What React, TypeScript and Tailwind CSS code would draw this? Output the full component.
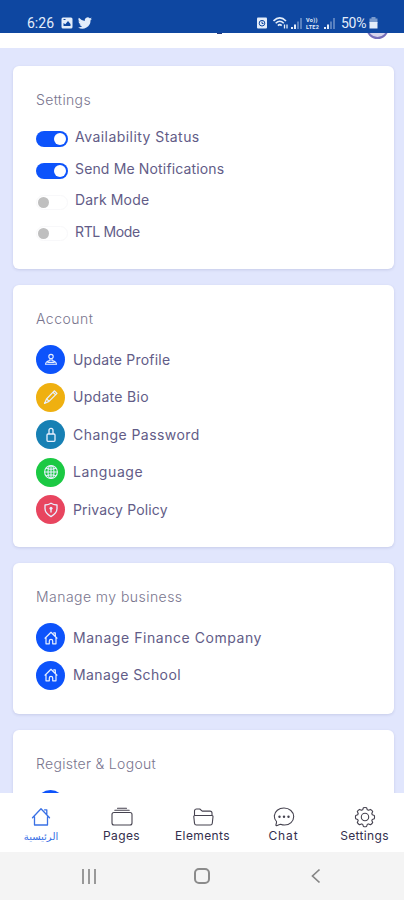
import type { ReactNode } from 'react';

interface Toggle {
    label: string;
    on: boolean;
    tracking: string;
}

interface Row {
    label: string;
    color: string;
    icon: ReactNode;
    tracking: string;
}

interface SectionProps {
    title: string;
    tracking: string;
    className: string;
    children: ReactNode;
}

const PersonIcon = () => (
    <svg viewBox="0 0 16 16" fill="none" stroke="currentColor" strokeWidth="1.1" className="w-4 h-4" aria-hidden="true">
        <circle cx="8" cy="4.6" r="2.2" />
        <path d="M7 6.7v1.8C4.200 9 2.700 10 2.500 12.200h11C13.300 10 11.800 9 9 8.500V6.700M4.400 10.400h7.200" />
    </svg>
);

const PencilIcon = () => (
    <svg viewBox="0 0 16 16" fill="none" stroke="currentColor" strokeWidth="1.2" strokeLinejoin="round" className="w-4 h-4" aria-hidden="true">
        <path d="M1.5 14.5l2-4.500L11.300 1.800l2.700 2.600-8 8-4.500 2.100zM10 3.300l2.700 2.600M3.700 10l2.400 2.200" />
    </svg>
);

const LockIcon = () => (
    <svg viewBox="0 0 16 16" fill="none" stroke="currentColor" strokeWidth="1.3" strokeLinejoin="round" className="w-4 h-4" aria-hidden="true">
        <rect x="4" y="7" width="8" height="7.3" rx="1" />
        <path d="M6 7V3.300a2 2 0 014 0V7" />
    </svg>
);

const GlobeIcon = () => (
    <svg viewBox="0 0 16 16" fill="none" stroke="currentColor" strokeWidth="1.1" className="w-4 h-4" aria-hidden="true">
        <circle cx="8" cy="8" r="6.4" />
        <ellipse cx="8" cy="8" rx="3" ry="6.4" />
        <path d="M8 1.6v12.8M1.6 8h12.8M3.2 4.2c2.8 1.2 6.8 1.2 9.6 0M3.2 11.8c2.8-1.2 6.8-1.2 9.6 0" />
    </svg>
);

const ShieldIcon = () => (
    <svg viewBox="0 0 16 16" fill="none" stroke="currentColor" strokeWidth="1.3" strokeLinejoin="round" className="w-4 h-4" aria-hidden="true">
        <path d="M8 1.2c1.8 1.2 3.6 1.7 6 1.8v3.6c0 3.6-2.200 6-6 8-3.800-2-6-4.400-6-8V3c2.400-.1 4.200-.6 6-1.800z" />
        <circle cx="8" cy="6.2" r="1.5" fill="currentColor" stroke="none" />
        <path d="M8 6.5v4" strokeWidth="1.4" />
    </svg>
);

const HomeIcon = () => (
    <svg viewBox="0 0 16 16" fill="none" stroke="currentColor" strokeWidth="1.2" strokeLinejoin="round" strokeLinecap="round" className="w-4 h-4" aria-hidden="true">
        <path d="M3 7.300v6.500h3.300v-2.800a1.700 1.700 0 013.400 0v2.800H13V7.300M2 8.200l6-5.900 6 5.900M10.700 2.900h1.600v3.200" />
    </svg>
);

const toggles: Toggle[] = [
    { label: 'Availability Status', on: true, tracking: 'tracking-[0.45px]' },
    { label: 'Send Me Notifications', on: true, tracking: 'tracking-[0.15px]' },
    { label: 'Dark Mode', on: false, tracking: 'tracking-[0.15px]' },
    { label: 'RTL Mode', on: false, tracking: 'tracking-[-0.35px]' },
];

const accountRows: Row[] = [
    { label: 'Update Profile', color: 'bg-[#0d53fb]', icon: <PersonIcon />, tracking: 'tracking-[0.2px]' },
    { label: 'Update Bio', color: 'bg-[#efb010]', icon: <PencilIcon />, tracking: 'tracking-[0.3px]' },
    { label: 'Change Password', color: 'bg-[#1780b4]', icon: <LockIcon />, tracking: 'tracking-[0.45px]' },
    { label: 'Language', color: 'bg-[#1bc943]', icon: <GlobeIcon />, tracking: 'tracking-[0.6px]' },
    { label: 'Privacy Policy', color: 'bg-[#e8455f]', icon: <ShieldIcon />, tracking: 'tracking-[0.15px]' },
];

const businessRows: Row[] = [
    { label: 'Manage Finance Company', color: 'bg-[#0d53fb]', icon: <HomeIcon />, tracking: 'tracking-[0.55px]' },
    { label: 'Manage School', color: 'bg-[#0d53fb]', icon: <HomeIcon />, tracking: 'tracking-[0.4px]' },
];

function Section({ title, tracking, className, children }: SectionProps) {
    return (
        <section className={`shrink-0 rounded-md bg-white px-[23px] pt-[22px] shadow-[0_1px_3px_rgba(60,70,130,0.16)] ${className}`}>
            <h2 className={`h-6 whitespace-nowrap text-sm leading-6 font-light text-[#79758e] ${tracking}`}>{title}</h2>
            {children}
        </section>
    );
}

function IconRow({ label, color, icon, tracking }: Row) {
    return (
        <li className="flex h-[37.5px] items-center gap-2">
            <span className={`flex h-[29px] w-[29px] shrink-0 items-center justify-center rounded-full text-[#e8f0ff] ${color}`}>
                {icon}
            </span>
            <span className={`whitespace-nowrap text-sm text-[#625c87] ${tracking}`}>{label}</span>
        </li>
    );
}

function ToggleRow({ label, on, tracking }: Toggle) {
    return (
        <li className="flex h-[31.5px] items-center gap-[7px]">
            {on ? (
                <span className="mt-[3px] flex h-4 w-8 items-center justify-end rounded-full bg-[#0d53fb] pr-[2px]">
                    <span className="h-3 w-3 rounded-full bg-white" />
                </span>
            ) : (
                <span className="mt-[3px] flex h-[15px] w-8 items-center rounded-full border border-[#f8f8fa] pl-[1px]">
                    <span className="h-[11px] w-[11px] rounded-full bg-[#bfbfbf]" />
                </span>
            )}
            <span className={`-mt-px whitespace-nowrap text-sm text-[#625c87] ${tracking}`}>{label}</span>
        </li>
    );
}

function Signal() {
    return (
        <svg viewBox="0 0 11 11" fill="currentColor" className="w-[11px] h-[11px]" aria-hidden="true">
            <path d="M0 9h2v2H0zM3 6.5h2V11H3z" />
            <path d="M6 3.5h2V11H6zM9 0h2v11H9z" opacity="0.35" />
        </svg>
    );
}

function StatusBar() {
    return (
        <div className="relative z-10 h-[33px] shrink-0 bg-[#0e47a1] font-['Roboto',sans-serif] text-[#e3edfa]">
            <div className="flex items-center justify-between pt-[15px] pr-[26px] pl-[27px]">
                <div className="flex h-4 items-center">
                    <span className="w-[28px] text-[14px] leading-4">6:26</span>
                    <svg viewBox="0 0 12 12" className="ml-[6px] w-3 h-3" aria-hidden="true">
                        <rect x="0.5" y="0.5" width="11" height="11" rx="1.5" fill="currentColor" />
                        <path d="M2.5 9V6l1.8 1.2L7 4l2.5 3v2z" fill="#0e47a1" />
                        <path d="M2.5 2.5h2" stroke="#0e47a1" />
                    </svg>
                    <svg viewBox="0 0 24 24" fill="currentColor" className="ml-[5px] w-[14px] h-[14px]" aria-hidden="true">
                        <path d="M23.95 4.6a10 10 0 01-2.8.8 5 5 0 002.1-2.7 10 10 0 01-3.1 1.2 4.9 4.9 0 00-8.4 4.5A14 14 0 011.6 3.2a4.900 4.900 0 001.500 6.600 4.900 4.900 0 01-2.200-.6 4.900 4.900 0 003.900 4.900 5 5 0 01-2.200.1 4.900 4.900 0 004.600 3.400A9.900 9.900 0 010 19.500 14 14 0 0021.500 7.100a10 10 0 002.450-2.500z" />
                    </svg>
                </div>
                <div className="flex h-4 items-center">
                    <svg viewBox="0 0 12 12" className="w-3 h-3" aria-hidden="true">
                        <rect x="1" y="0.5" width="10" height="11" rx="1" fill="currentColor" />
                        <circle cx="6" cy="6.2" r="2.8" fill="none" stroke="#0e47a1" />
                        <path d="M6 4.5v2h1.500" fill="none" stroke="#0e47a1" />
                    </svg>
                    <svg viewBox="0 0 16 12" fill="none" stroke="currentColor" strokeWidth="1.6" className="ml-[5px] w-4 h-3" aria-hidden="true">
                        <path d="M0.5 4c4-4 8.500-4 12.500 0M2.700 6.300c2.600-2.600 5.500-2.600 8.100 0M4.900 8.600c1.300-1.300 2.500-1.300 3.800 0" />
                        <path d="M11.5 7.5v4M14 7.5v4" strokeWidth="1.3" />
                    </svg>
                    <span className="ml-[2px] flex">
                        <Signal />
                    </span>
                    <span className="ml-[4px] flex w-[18px] flex-col gap-px text-[5.5px] leading-[6px] font-bold tracking-[0.3px]">
                        <span>Vo))</span>
                        <span>LTE2</span>
                    </span>
                    <Signal />
                    <span className="ml-[6px] w-[28px] text-[14px] leading-4 tracking-[-0.3px]">50%</span>
                    <svg viewBox="0 0 9 12" className="w-[9px] h-3" aria-hidden="true">
                        <path d="M2.5 0h4v1.5h2V6h-8V1.5h2z" fill="currentColor" opacity="0.5" />
                        <path d="M0.5 5h8v6.5h-8z" fill="currentColor" />
                    </svg>
                </div>
            </div>
        </div>
    );
}

function TopBar() {
    return (
        <header className="relative h-[15px] shrink-0 bg-white">
            <span className="absolute top-0 left-[217px] h-px w-[5px] bg-[#273a7c]" />
            <span className="absolute -top-[17px] left-[366px] h-[23px] w-[23px] rounded-full border-2 border-[#766fba] bg-[#d6d4eb]" />
        </header>
    );
}

function TabBar() {
    const item = 'flex w-[81px] flex-col items-center';
    const label = 'h-4 whitespace-nowrap text-xs leading-4 -mt-px text-[#332e4d]';
    const icon = 'h-6 w-6 text-[#45424f]';

    return (
        <nav className="flex h-[59px] shrink-0 bg-white pt-[12px]">
            <a className="flex w-[81px] flex-col items-center pl-px text-[#3970e5]">
                <svg viewBox="0 0 20 24" fill="none" stroke="currentColor" strokeWidth="1.3" strokeLinejoin="round" strokeLinecap="round" className="h-6 w-5" aria-hidden="true">
                    <path d="M3.5 11.5V20h13v-8.500M1.500 12.800L10 3.800l8.500 9M13.500 4.800h2.300v4.200" />
                </svg>
                <span className="h-4 font-['DejaVu_Sans',sans-serif] text-[10px] leading-4" dir="rtl">الرئيسية</span>
            </a>
            <a className={item}>
                <svg viewBox="0 0 24 24" fill="none" stroke="currentColor" strokeWidth="1.1" strokeLinecap="round" className={icon} aria-hidden="true">
                    <rect x="2" y="7.5" width="20" height="12.5" rx="2" />
                    <path d="M4.8 5.2h14.4M7.5 3.3h9" />
                </svg>
                <span className={`${label} tracking-[0.4px]`}>Pages</span>
            </a>
            <a className={item}>
                <svg viewBox="0 0 24 24" fill="none" stroke="currentColor" strokeWidth="1.1" strokeLinejoin="round" className={icon} aria-hidden="true">
                    <path d="M3.5 10.8V6a2 2 0 012-2h3.3l2.400 2.100h7.800a2 2 0 012 2v2.700" />
                    <path d="M3.9 10.5h17c.7 0 1.200.5 1.100 1.200l-.7 6.500a2 2 0 01-2 1.800H5.500a2 2 0 01-2-1.800l-.7-6.500c-.1-.7.400-1.200 1.100-1.200z" />
                </svg>
                <span className={`${label} tracking-[0.4px]`}>Elements</span>
            </a>
            <a className={item}>
                <svg viewBox="0 0 24 24" fill="none" stroke="currentColor" strokeWidth="1.1" strokeLinejoin="round" className={icon} aria-hidden="true">
                    <path d="M4.5 16.5C2.800 14.500 2.200 12.800 2.300 10.900 2.600 6.300 6.800 3 12 3c5.400 0 9.700 3.700 9.700 8.600S17.700 20 12.600 20c-1.400 0-2.800-.3-4-.8-1.200.1-2.600 1-4.100 1.400-.5.100-.7-.2-.6-.6.400-1.200.8-2.400.6-3.500z" />
                    <g fill="currentColor" stroke="none">
                        <circle cx="7.5" cy="11.7" r="1.2" />
                        <circle cx="12" cy="11.7" r="1.2" />
                        <circle cx="16.5" cy="11.7" r="1.2" />
                    </g>
                </svg>
                <span className={`${label} tracking-[0.9px]`}>Chat</span>
            </a>
            <a className="flex w-[80px] flex-col items-center pl-px">
                <svg viewBox="0 0 24 24" fill="none" stroke="currentColor" strokeWidth="1.1" strokeLinejoin="round" className={icon} aria-hidden="true">
                    <circle cx="12" cy="12" r="3.7" />
                    <path d="M10.4 2.8q1.600-.6 3.200 0l.7 2q.7.2 1.200.5l2-.9q1.500.8 2.200 2.200l-.9 2q.3.500.5 1.200l2 .7q.6 1.600 0 3.200l-2 .7q-.2.700-.5 1.200l.9 2q-.7 1.400-2.200 2.200l-2-.9q-.5.300-1.200.5l-.7 2q-1.600.6-3.200 0l-.7-2q-.7-.2-1.200-.5l-2 .9q-1.500-.8-2.200-2.200l.9-2q-.3-.5-.5-1.200l-2-.7q-.6-1.600 0-3.200l2-.7q.2-.7.500-1.200l-.9-2q.7-1.400 2.200-2.200l2 .9q.5-.3 1.200-.5z" />
                </svg>
                <span className={`${label} tracking-[0.35px]`}>Settings</span>
            </a>
        </nav>
    );
}

function SystemBar() {
    return (
        <div className="flex h-12 shrink-0 items-center bg-[#f4f4f4] text-[#858585]">
            <div className="ml-[80px] flex h-[15px] w-[18px] justify-center gap-[4px]">
                <span className="w-[2px] bg-[#999]" />
                <span className="w-[2px] bg-[#999]" />
                <span className="w-[2px] bg-[#999]" />
            </div>
            <span className="ml-[96px] h-4 w-4 rounded-[5px] border-2 border-[#8b8b8b]" />
            <svg viewBox="0 0 10 16" fill="none" stroke="currentColor" strokeWidth="1.7" className="ml-[101px] w-[10px] h-4" aria-hidden="true">
                <path d="M8.5 1.5L1.5 8l7 6.5" />
            </svg>
        </div>
    );
}

export default function App() {
    return (
        <div className="flex h-[900px] w-[404px] flex-col overflow-hidden bg-[#e1e6fd] font-['Inter',sans-serif]">
            <StatusBar />
            <TopBar />
            <main className="flex min-h-0 flex-1 flex-col gap-4 overflow-hidden pt-[18px] pr-[10px] pl-[13px]">
                <Section title="Settings" tracking="tracking-[0.35px]" className="h-[203px]">
                    <ul className="pt-[10px]">
                        {toggles.map((toggle) => (
                            <ToggleRow key={toggle.label} {...toggle} />
                        ))}
                    </ul>
                </Section>
                <Section title="Account" tracking="tracking-[0.5px]" className="h-[262px]">
                    <ul className="pt-[10px]">
                        {accountRows.map((row) => (
                            <IconRow key={row.label} {...row} />
                        ))}
                    </ul>
                </Section>
                <Section title="Manage my business" tracking="tracking-[0.45px]" className="h-[151px]">
                    <ul className="pt-[10px]">
                        {businessRows.map((row) => (
                            <IconRow key={row.label} {...row} />
                        ))}
                    </ul>
                </Section>
                <Section title="Register & Logout" tracking="tracking-[0.3px]" className="h-[151px]">
                    <ul className="pt-[10px]">
                        <li className="flex h-[37.5px] items-center">
                            <span className="h-[29px] w-[29px] rounded-full bg-[#0d53fb]" />
                        </li>
                    </ul>
                </Section>
            </main>
            <TabBar />
            <SystemBar />
        </div>
    );
}
